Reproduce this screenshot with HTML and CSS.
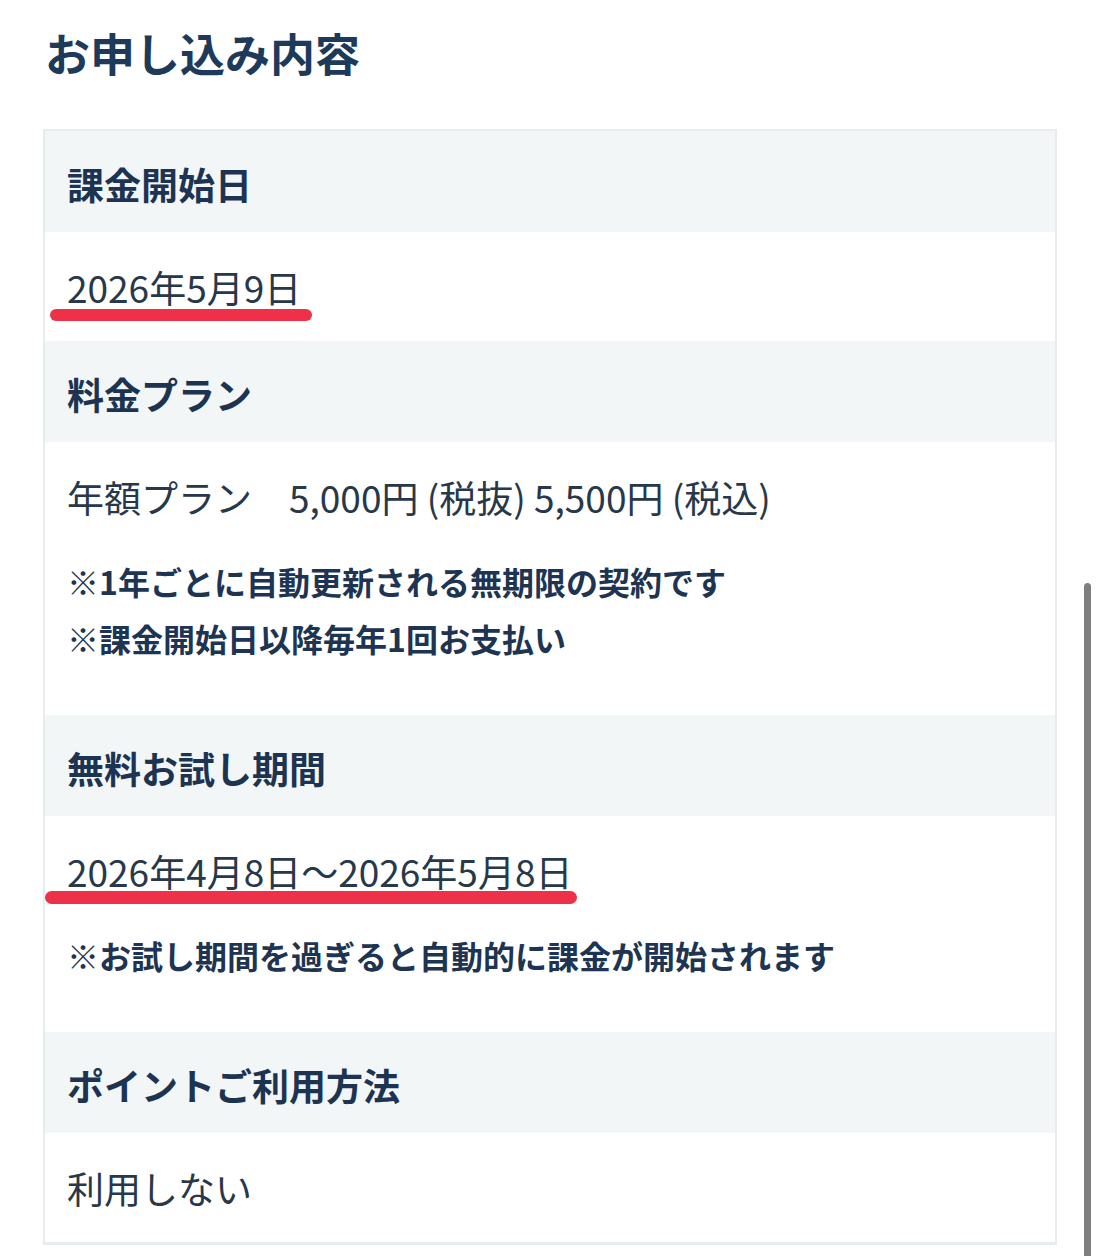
FILE: index.html
```html
<!DOCTYPE html>
<html lang="ja">
<head>
<meta charset="utf-8">
<title>お申し込み内容</title>
<link rel="stylesheet" href="styles.css">
</head>
<body>
<main class="page">
  <h1 class="title">お申し込み内容</h1>
  <section class="table">
    <div class="row-head">課金開始日</div>
    <div class="row-body">
      <p class="value"><span class="marked">2026年5月9日</span></p>
    </div>
    <div class="row-head">料金プラン</div>
    <div class="row-body with-notes">
      <p class="value">年額プラン　5,000円 (税抜) 5,500円 (税込)</p>
      <div class="notes">
        <p>※1年ごとに自動更新される無期限の契約です</p>
        <p>※課金開始日以降毎年1回お支払い</p>
      </div>
    </div>
    <div class="row-head">無料お試し期間</div>
    <div class="row-body with-notes">
      <p class="value"><span class="marked wide">2026年4月8日～2026年5月8日</span></p>
      <div class="notes">
        <p>※お試し期間を過ぎると自動的に課金が開始されます</p>
      </div>
    </div>
    <div class="row-head">ポイントご利用方法</div>
    <div class="row-body">
      <p class="value">利用しない</p>
    </div>
  </section>
</main>
<div class="scrollbar"></div>
</body>
</html>
```
FILE: styles.css
```css
html, body {
  margin: 0;
  padding: 0;
  background: #ffffff;
}
body {
  font-family: "Noto Sans CJK JP", "Noto Sans", sans-serif;
  color: #1d3654;
  overflow: hidden;
}
.page {
  padding: 0 43px;
}
.title {
  margin: 0 0 44px 0;
  padding: 21px 0 0 2px;
  font-size: 45px;
  line-height: 64px;
  font-weight: 700;
  color: #1d3a5b;
  letter-spacing: 0;
}
.table {
  border: 2px solid #e7edef;
  border-bottom-width: 3px;
  display: flex;
  flex-direction: column;
}
.row-head {
  background: #f2f6f7;
  padding: 26px 22px 21px;
  font-size: 37px;
  line-height: 54px;
  font-weight: 700;
  color: #1c3452;
}
.row-body {
  background: #ffffff;
  padding: 28px 22px 27px;
}
.row-body.with-notes {
  padding-bottom: 48px;
}
.value {
  margin: 0;
  font-size: 37px;
  line-height: 54px;
  font-weight: 400;
  color: #27384a;
}
.marked {
  position: relative;
  display: inline-block;
}
.marked::after {
  content: "";
  position: absolute;
  left: -17px;
  right: -11px;
  top: 49px;
  height: 12px;
  border-radius: 7px;
  background: #ef3049;
}
.marked.wide::after {
  left: -22px;
  right: -5px;
  top: 47px;
  height: 13px;
}
.notes {
  margin-top: 29px;
}
.notes p {
  margin: 0;
  font-size: 32px;
  line-height: 57px;
  font-weight: 700;
  color: #1d3452;
}
.scrollbar {
  position: fixed;
  left: 1084px;
  top: 583px;
  width: 7px;
  bottom: 0;
  background: #7f7f7f;
  border-radius: 4px 4px 0 0;
}
```
